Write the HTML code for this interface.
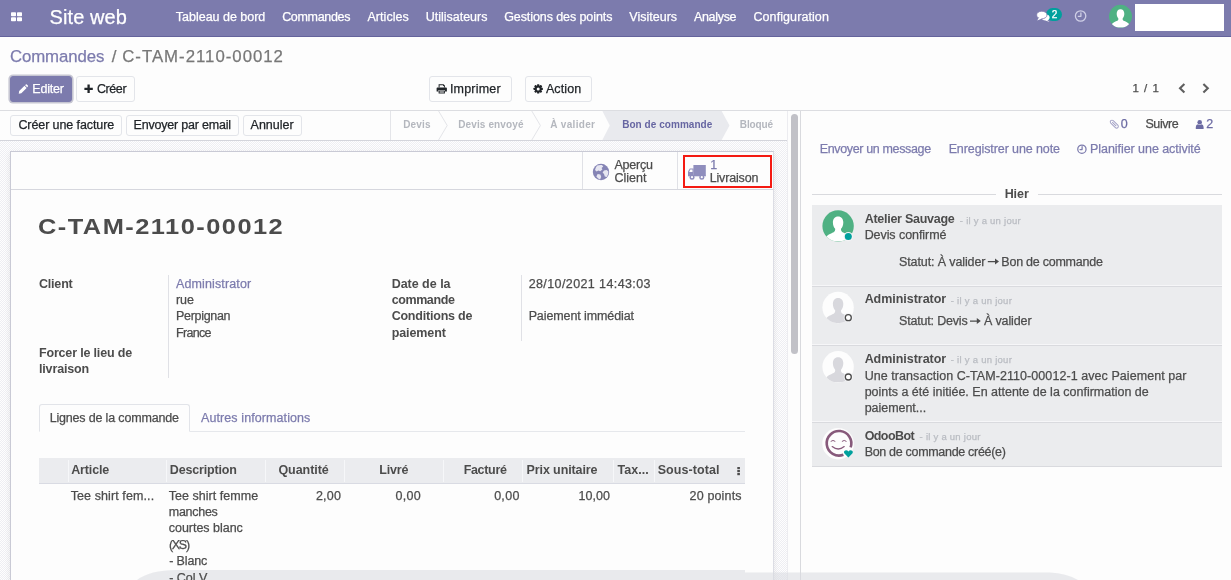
<!DOCTYPE html>
<html lang="fr">
<head>
<meta charset="utf-8">
<title>Commandes / C-TAM-2110-00012 - Site web</title>
<style>
html,body{margin:0;padding:0;}
body{width:1231px;height:580px;overflow:hidden;position:relative;background:#fdfdfd;
  font-family:"Liberation Sans",sans-serif;font-size:12.5px;color:#4c4c4c;}
.abs,.t,svg.i{position:absolute;}
.t{white-space:nowrap;line-height:1;z-index:5;-webkit-text-stroke:.25px currentColor;}
svg.i{z-index:4;overflow:visible;}
/* navbar */
#navbar{left:0;top:0;width:1231px;height:36px;background:#7c7bad;border-bottom:1px solid #64639b;}
#userbox{left:1135px;top:4px;width:89px;height:27px;background:#fff;}
#badge{left:1046.4px;top:7.5px;width:16px;height:13px;border-radius:6.5px;background:#00a09d;z-index:4;}
/* control panel */
#cp{left:0;top:37px;width:1231px;height:73px;background:#fdfdfd;border-bottom:1px solid #dcdde1;}
.btn{box-sizing:border-box;border:1px solid #e3e5ea;border-radius:3px;background:#fdfdfd;}
#b-edit{left:10px;top:76px;width:62px;height:25.8px;background:#7c7bad;border-color:#7c7bad;box-shadow:0 0 0 1.6px #c6c6d2;}
#b-create{left:76px;top:76px;width:58.7px;height:25.8px;}
#b-print{left:428.5px;top:76px;width:83px;height:25.8px;}
#b-action{left:525.3px;top:76px;width:67.2px;height:25.8px;}
/* statusbar */
#sb{left:0;top:111px;width:787px;height:29px;background:#fdfdfd;border-bottom:1px solid #d3d4db;}
#sb1{left:10.4px;top:115.4px;width:111.8px;height:20.6px;}
#sb2{left:126.1px;top:115.4px;width:112.5px;height:20.6px;}
#sb3{left:242.5px;top:115.4px;width:59.5px;height:20.6px;}
/* form area */
#formbg{left:0;top:141px;width:787px;height:439px;background:repeating-conic-gradient(#fefefe 0 25%,#eeeef3 0 50%) 0 0/2px 2px;}
#sheet{left:10px;top:151px;width:762px;height:440px;background:#fdfdfd;border:1px solid #c9cad5;border-right-color:#dcdde4;box-shadow:0 2px 6px rgba(0,0,0,.08);}
#bbox{left:11px;top:152px;width:762px;height:37px;border-bottom:1px solid #d6d7de;}
.vsep{width:1px;background:#e0e1e6;}
#red{left:683px;top:155px;width:84.5px;height:29px;border:2px solid #f41a12;z-index:6;}
/* notebook */
#tabline{left:39px;top:431px;width:705.5px;height:1px;background:#e6e8ec;}
#tab1{left:39px;top:404px;width:151px;height:28px;box-sizing:border-box;border:1px solid #e2e4e9;border-bottom:1px solid #fdfdfd;border-radius:3px 3px 0 0;background:#fdfdfd;}
#thead{left:39px;top:458px;width:705.5px;height:24.5px;background:#ebecef;border-bottom:1.5px solid #d9dbe3;}
.csep{top:460px;height:22px;width:1px;background:#f6f7f9;}
/* scroll */
#track{left:787px;top:111px;width:13px;height:469px;background:#fdfdfd;border-left:1px solid #ececf0;box-sizing:border-box;}
#thumb{left:791px;top:114px;width:7px;height:240px;border-radius:3.5px;background:#c1c1c7;}
/* chatter */
#chat{left:800px;top:111px;width:431px;height:469px;background:#fdfdfd;border-left:1px solid #d9dade;box-sizing:border-box;}
.hl{height:1px;background:#d9dade;}
#msgs{left:812px;top:205px;width:410px;height:261px;background:#ebecee;border-bottom:1px solid #d9dade;}
.msep{left:812px;width:410px;height:1px;background:#d9dade;box-shadow:0 -1px 0 #f6f6f8;}
#overlay{left:0;top:0;z-index:3;}
#txt{position:absolute;left:0;top:0;width:1231px;height:580px;z-index:5;will-change:transform;}
</style>
</head>
<body>
<!-- ===== top navigation bar ===== -->
<nav id="navbar" class="abs"></nav>
<div id="userbox" class="abs"></div>
<div id="badge" class="abs"></div>
<!-- ===== control panel ===== -->
<div id="cp" class="abs"></div>
<div id="b-edit" class="abs btn"></div>
<div id="b-create" class="abs btn"></div>
<div id="b-print" class="abs btn"></div>
<div id="b-action" class="abs btn"></div>
<!-- ===== status bar ===== -->
<div id="sb" class="abs"></div>
<div id="sb1" class="abs btn"></div>
<div id="sb2" class="abs btn"></div>
<div id="sb3" class="abs btn"></div>
<!-- ===== form ===== -->
<div id="formbg" class="abs"></div>
<div id="sheet" class="abs"></div>
<div id="bbox" class="abs"></div>
<div class="abs vsep" style="left:582px;top:152px;height:37px"></div>
<div class="abs vsep" style="left:677px;top:152px;height:37px"></div>
<div id="red" class="abs"></div>
<div class="abs vsep" style="left:168px;top:275px;height:103px"></div>
<div class="abs vsep" style="left:521px;top:275px;height:66px"></div>
<div id="tabline" class="abs"></div>
<div id="tab1" class="abs"></div>
<div id="thead" class="abs"></div>
<div class="abs csep" style="left:68px"></div>
<div class="abs csep" style="left:166px"></div>
<div class="abs csep" style="left:265px"></div>
<div class="abs csep" style="left:344px"></div>
<div class="abs csep" style="left:443px"></div>
<div class="abs csep" style="left:522px"></div>
<div class="abs csep" style="left:613px"></div>
<div class="abs csep" style="left:654px"></div>
<div id="track" class="abs"></div>
<div id="thumb" class="abs"></div>
<!-- ===== chatter ===== -->
<div id="chat" class="abs"></div>
<div class="abs hl" style="left:812px;top:194px;width:184px"></div>
<div class="abs hl" style="left:1038px;top:194px;width:184px"></div>
<div id="msgs" class="abs"></div>
<div class="abs msep" style="top:286px"></div>
<div class="abs msep" style="top:344.5px"></div>
<div class="abs msep" style="top:421.5px"></div>

<!-- ===== vector icons & shapes ===== -->
<svg id="gfx" class="i" style="left:0;top:0" width="1231" height="580" viewBox="0 0 1231 580">
<!-- apps grid -->
<g fill="#fff">
<rect x="11" y="12.2" width="5" height="4" rx=".8"/><rect x="17" y="12.2" width="5" height="4" rx=".8"/>
<rect x="11" y="17.2" width="5" height="4" rx=".8"/><rect x="17" y="17.2" width="5" height="4" rx=".8"/>
</g>
<!-- comments -->
<g fill="#fff">
<ellipse cx="1045.6" cy="17.6" rx="4" ry="3"/><path d="M1046.5,19.5 L1049.6,22 L1045.5,20.6Z"/>
<ellipse cx="1041.8" cy="15" rx="5.2" ry="3.8" stroke="#7c7bad" stroke-width=".8"/><path d="M1039,17.5 L1037.2,20.6 L1042,18.6Z"/>
</g>
<!-- clock (navbar) -->
<g fill="none" stroke="#cfcfe6" stroke-width="1.3" stroke-linecap="round" stroke-linejoin="round">
<circle cx="1080.6" cy="16" r="5.2"/><path d="M1080.9,12.9 V16.3 H1078.3"/>
</g>
<!-- user avatar (navbar) -->
<defs>
<clipPath id="c1"><circle cx="1120.5" cy="16.3" r="11.5"/></clipPath>
<clipPath id="c2"><circle cx="838.1" cy="226" r="15.7"/></clipPath>
<clipPath id="c3"><circle cx="838.1" cy="307.5" r="15.7"/></clipPath>
<clipPath id="c4"><circle cx="838.1" cy="366.8" r="15.7"/></clipPath>
<symbol id="sil" viewBox="0 0 32 32">
<path d="M16,6.3 C19.4,6.3 21.3,9 21.3,12.4 C21.3,15.2 20.2,17.6 19,18.9 C18.8,20.4 19.3,21.6 20.5,22.3 C24,24 27.4,24.9 28.6,28.4 L28.8,32 L3.2,32 L3.4,28.4 C4.6,24.9 8,24 11.5,22.3 C12.7,21.6 13.2,20.4 13,18.9 C11.8,17.6 10.7,15.2 10.7,12.4 C10.7,9 12.6,6.3 16,6.3Z"/>
</symbol>
</defs>
<circle cx="1120.5" cy="16.3" r="11.5" fill="#4fb183"/>
<g clip-path="url(#c1)" fill="#fff"><use href="#sil" x="1109" y="4.8" width="23" height="23"/></g>
<!-- pencil -->
<g fill="#fff"><path d="M19,93.6 L19.5,90.6 L25.7,84.4 L28.2,86.9 L22,93.1Z M26.4,83.7 L27.2,82.9 Q27.8,82.4 28.4,83 L29.6,84.2 Q30.1,84.8 29.6,85.4 L28.9,86.2Z" transform="translate(23.3,89) scale(.86) translate(-24.3,-88.2)"/></g>
<!-- plus -->
<path d="M88.6,84.6 V93 M84.4,88.8 H92.8" stroke="#212529" stroke-width="2.3" fill="none"/>
<!-- print -->
<g fill="#212529">
<path d="M438.6,84.2 H443.6 L444.9,85.5 V87.6 H443.9 V86 H443 V85.2 H439.6 V87.6 H438.6Z"/>
<path d="M437.4,87.4 H446 Q446.9,87.4 446.9,88.3 V91.6 H445 V90 H438.4 V91.6 H436.6 V88.3 Q436.6,87.4 437.4,87.4Z"/>
<path d="M438.6,90.6 H444.9 V93.5 H438.6Z M439.6,91.5 V92.6 H443.9 V91.5Z" fill-rule="evenodd"/>
</g>
<!-- cog -->
<g transform="translate(538.2,88.9)">
<g fill="#212529">
<rect x="-1.1" y="-4.7" width="2.2" height="9.4" rx=".4"/>
<rect x="-1.1" y="-4.7" width="2.2" height="9.4" rx=".4" transform="rotate(45)"/>
<rect x="-1.1" y="-4.7" width="2.2" height="9.4" rx=".4" transform="rotate(90)"/>
<rect x="-1.1" y="-4.7" width="2.2" height="9.4" rx=".4" transform="rotate(135)"/>
<circle r="3.5"/></g><circle r="1.5" fill="#fff"/>
</g>
<!-- pager chevrons -->
<g fill="none" stroke="#5f5f5f" stroke-width="2.1">
<path d="M1184.4,83.9 L1180,88.2 L1184.4,92.5"/><path d="M1203.4,83.9 L1207.8,88.2 L1203.4,92.5"/>
</g>
<!-- statusbar arrows -->
<path d="M602.4,111 H721.6 L729.5,125.5 L721.6,140 H602.4 L609.8,125.5Z" fill="#e9eaee"/>
<g fill="none" stroke="#e4e5e9" stroke-width="1">
<path d="M390.5,111 V140"/>
<path d="M438.6,111 L447.2,125.5 L438.6,140"/>
<path d="M531.8,111 L540.4,125.5 L531.8,140"/>
</g>
<!-- globe -->
<circle cx="601" cy="172" r="8.2" fill="#8584b5"/>
<g fill="#e6e6f1">
<path d="M597.2,165.6 Q599.6,164.6 602,165 L603.2,166.6 L601.6,168 L602.4,169.6 L600.2,171.2 L598.4,170.4 L596.6,171.6 L595,170 Q595.6,167.2 597.2,165.6Z"/>
<path d="M604,170.6 L606.6,170 L608.4,171.6 Q608.6,174.6 606.8,177 L604.8,176.4 L604,174 L602.6,172.4Z"/>
<path d="M597.6,174 L600.4,174.6 L601.2,177 L600,179.4 Q597.6,178.6 596.4,176.6Z"/>
</g>
<!-- truck -->
<g fill="#8f8ebd">
<path d="M693.4,165 H705.8 V175.4 H693.4Z"/>
<path d="M689.8,168.4 H693.6 V175.4 H688 V171.6Z"/><rect x="688" y="175" width="17.8" height="1.3"/>
<circle cx="692" cy="177.2" r="2.5"/><circle cx="701.8" cy="177.2" r="2.5"/>
</g>
<circle cx="692" cy="177.2" r="1.1" fill="#fff"/><circle cx="701.8" cy="177.2" r="1.1" fill="#fff"/>
<path d="M690.3,169.6 H692.5 V172 H689.2Z" fill="#fff"/>
<!-- kebab -->
<g fill="#4c4c4c"><rect x="737.3" y="467" width="2.6" height="2.2"/><rect x="737.3" y="470" width="2.6" height="2.2"/><rect x="737.3" y="473" width="2.6" height="2.2"/></g>
<!-- paperclip -->
<g transform="translate(1114.3,124.15) rotate(-45)" fill="none" stroke="#a3a2c6" stroke-width=".95" stroke-linecap="round">
<rect x="-1.75" y="-5" width="3.5" height="10" rx="1.75"/><path d="M0,-2.6 V2.4"/>
</g>
<!-- followers user -->
<g fill="#6c6ba3"><circle cx="1199.7" cy="122.3" r="2.3"/><path d="M1195.8,128.9 V127 Q1195.9,124.6 1198,124.3 Q1199.7,125.5 1201.4,124.3 Q1203.5,124.6 1203.6,127 V128.9Z"/></g>
<!-- clock (chatter) -->
<g fill="none" stroke="#7c7bad" stroke-width="1.25" stroke-linecap="round" stroke-linejoin="round">
<circle cx="1081.9" cy="149.2" r="4.15"/><path d="M1082.1,146.7 V149.5 H1080"/>
</g>
<!-- long arrows -->
<g fill="#4c4c4c">
<path d="M987.8,260.9 H995 V258.6 L999,261.6 L995,264.6 V262.3 H987.8Z"/>
<path d="M970,320.4 H976.8 V318.1 L980.8,321.1 L976.8,324.1 V321.8 H970Z"/>
</g>
<!-- avatars -->
<circle cx="838.1" cy="226" r="15.7" fill="#4fb183"/>
<g clip-path="url(#c2)" fill="#fff"><use href="#sil" x="822.4" y="210.3" width="31.4" height="31.4"/></g>
<circle cx="848.3" cy="236.6" r="4.7" fill="#f3f3f5"/><circle cx="848.3" cy="236.6" r="3.5" fill="#00a09d"/>
<circle cx="838.1" cy="307.5" r="15.7" fill="#fdfdfd"/>
<g clip-path="url(#c3)" fill="#d8d8dd"><use href="#sil" x="822.4" y="291.8" width="31.4" height="31.4"/></g>
<circle cx="848.3" cy="317.7" r="4.7" fill="#f3f3f5"/><circle cx="848.3" cy="317.7" r="3" fill="#fff" stroke="#4c4c4c" stroke-width="1.3"/>
<circle cx="838.1" cy="366.8" r="15.7" fill="#fdfdfd"/>
<g clip-path="url(#c4)" fill="#d8d8dd"><use href="#sil" x="822.4" y="351.1" width="31.4" height="31.4"/></g>
<circle cx="848.3" cy="377" r="4.7" fill="#f3f3f5"/><circle cx="848.3" cy="377" r="3" fill="#fff" stroke="#4c4c4c" stroke-width="1.3"/>
<!-- odoobot -->
<circle cx="838.1" cy="443.7" r="15.8" fill="#fdfdfd"/>
<g fill="none" stroke="#875a7b" stroke-linecap="round">
<path d="M850.6,447.4 A12.3,12.3 0 1 0 843.4,454.8" stroke-width="2.6" stroke-linecap="butt"/>
<path d="M832.2,446.6 Q838.2,451.4 844.2,446.6" stroke-width="1.3"/>
<path d="M831,441.2 Q833,439.4 835,441.2" stroke-width="1"/>
<path d="M842.2,441.2 Q844.2,439.4 846.2,441.2" stroke-width="1"/>
</g>
<path d="M848.4,457.4 L844.5,453.6 Q843.2,451.5 845.2,450.4 Q847.2,449.8 848.4,451.6 Q849.6,449.8 851.6,450.4 Q853.6,451.5 852.3,453.6Z" fill="#00a09d"/>

</svg>
<svg id="overlay" class="abs" width="1231" height="580" viewBox="0 0 1231 580">
<path d="M137,580 Q150,570 176,570 L745,570 L745,572.5 L1050,572.5 Q1066,573 1078,580 Z" fill="#d9dbe0" fill-opacity=".55"/>
</svg>
<!-- ===== text ===== -->
<div id="txt">
<span class="t" style="left:49.50px;top:7.12px;font-size:20px;color:#fff;letter-spacing:0.097px;">Site web</span>
<span class="t" style="left:175.84px;top:11.07px;color:#fff;letter-spacing:-0.017px;">Tableau de bord</span>
<span class="t" style="left:282.14px;top:11.07px;color:#fff;letter-spacing:-0.319px;">Commandes</span>
<span class="t" style="left:367.44px;top:11.07px;color:#fff;letter-spacing:0.049px;">Articles</span>
<span class="t" style="left:425.64px;top:11.07px;color:#fff;letter-spacing:-0.000px;">Utilisateurs</span>
<span class="t" style="left:504.14px;top:11.07px;color:#fff;letter-spacing:-0.082px;">Gestions des points</span>
<span class="t" style="left:629.34px;top:11.07px;color:#fff;letter-spacing:0.001px;">Visiteurs</span>
<span class="t" style="left:693.94px;top:11.07px;color:#fff;letter-spacing:-0.310px;">Analyse</span>
<span class="t" style="left:753.44px;top:11.07px;color:#fff;letter-spacing:0.089px;">Configuration</span>
<span class="t" style="left:1051.75px;top:9.59px;font-size:10px;color:#fff;">2</span>
<span class="t" style="left:9.94px;top:49.43px;font-size:16.8px;color:#7c7bad;letter-spacing:-0.091px;">Commandes</span>
<span class="t" style="left:111.84px;top:49.43px;font-size:16.8px;color:#777;">/</span>
<span class="t" style="left:122.24px;top:49.43px;font-size:16.8px;color:#777;letter-spacing:0.993px;">C-TAM-2110-00012</span>
<span class="t" style="left:32.34px;top:83.27px;color:#fff;letter-spacing:-0.206px;">Editer</span>
<span class="t" style="left:96.94px;top:83.27px;color:#212529;letter-spacing:-0.410px;">Créer</span>
<span class="t" style="left:449.94px;top:83.27px;color:#212529;letter-spacing:0.188px;">Imprimer</span>
<span class="t" style="left:545.94px;top:83.27px;color:#212529;letter-spacing:0.095px;">Action</span>
<span class="t" style="left:1132.48px;top:82.72px;font-size:11.5px;letter-spacing:0.986px;">1 / 1</span>
<span class="t" style="left:18.44px;top:119.07px;color:#212529;letter-spacing:-0.097px;">Créer une facture</span>
<span class="t" style="left:133.54px;top:119.07px;color:#212529;letter-spacing:-0.195px;">Envoyer par email</span>
<span class="t" style="left:250.54px;top:119.07px;color:#212529;letter-spacing:0.022px;">Annuler</span>
<span class="t" style="left:403.25px;top:120.28px;font-size:10px;font-weight:700;-webkit-text-stroke:0;color:#b4b7be;letter-spacing:0.128px;">Devis</span>
<span class="t" style="left:458.25px;top:120.28px;font-size:10px;font-weight:700;-webkit-text-stroke:0;color:#b4b7be;letter-spacing:0.115px;">Devis envoyé</span>
<span class="t" style="left:550.15px;top:120.28px;font-size:10px;font-weight:700;-webkit-text-stroke:0;color:#b4b7be;letter-spacing:0.319px;">À valider</span>
<span class="t" style="left:622.15px;top:120.28px;font-size:10px;font-weight:700;-webkit-text-stroke:0;color:#6766a2;letter-spacing:0.052px;">Bon de commande</span>
<span class="t" style="left:739.85px;top:120.28px;font-size:10px;font-weight:700;-webkit-text-stroke:0;color:#b4b7be;letter-spacing:-0.158px;">Bloqué</span>
<span class="t" style="left:614.44px;top:159.37px;letter-spacing:-0.237px;">Aperçu</span>
<span class="t" style="left:614.44px;top:171.67px;letter-spacing:-0.009px;">Client</span>
<span class="t" style="left:710.24px;top:159.37px;color:#7c7bad;">1</span>
<span class="t" style="left:709.64px;top:171.67px;letter-spacing:-0.151px;">Livraison</span>
<span class="t" style="left:38.49px;top:216.00px;font-size:22.5px;font-weight:700;-webkit-text-stroke:0;letter-spacing:1.293px;transform:scaleX(1.13);transform-origin:0 0;">C-TAM-2110-00012</span>
<span class="t" style="left:38.94px;top:277.57px;font-weight:700;-webkit-text-stroke:0;letter-spacing:-0.182px;">Client</span>
<span class="t" style="left:38.94px;top:347.47px;font-weight:700;-webkit-text-stroke:0;letter-spacing:-0.166px;">Forcer le lieu de</span>
<span class="t" style="left:38.94px;top:363.37px;font-weight:700;-webkit-text-stroke:0;letter-spacing:-0.137px;">livraison</span>
<span class="t" style="left:175.94px;top:277.57px;color:#7c7bad;letter-spacing:0.132px;">Administrator</span>
<span class="t" style="left:175.94px;top:293.87px;letter-spacing:-0.077px;">rue</span>
<span class="t" style="left:175.94px;top:310.17px;letter-spacing:-0.297px;">Perpignan</span>
<span class="t" style="left:175.94px;top:326.87px;letter-spacing:-0.656px;">France</span>
<span class="t" style="left:391.64px;top:277.57px;font-weight:700;-webkit-text-stroke:0;letter-spacing:-0.015px;">Date de la</span>
<span class="t" style="left:391.64px;top:293.87px;font-weight:700;-webkit-text-stroke:0;letter-spacing:-0.396px;">commande</span>
<span class="t" style="left:391.64px;top:310.17px;font-weight:700;-webkit-text-stroke:0;letter-spacing:-0.209px;">Conditions de</span>
<span class="t" style="left:391.64px;top:326.87px;font-weight:700;-webkit-text-stroke:0;letter-spacing:-0.095px;">paiement</span>
<span class="t" style="left:528.64px;top:277.57px;letter-spacing:0.401px;">28/10/2021 14:43:03</span>
<span class="t" style="left:528.64px;top:310.17px;letter-spacing:-0.098px;">Paiement immédiat</span>
<span class="t" style="left:49.64px;top:412.07px;letter-spacing:-0.170px;">Lignes de la commande</span>
<span class="t" style="left:201.04px;top:412.07px;color:#7c7bad;letter-spacing:0.091px;">Autres informations</span>
<span class="t" style="left:71.14px;top:463.97px;font-weight:700;-webkit-text-stroke:0;letter-spacing:-0.130px;">Article</span>
<span class="t" style="left:169.84px;top:463.97px;font-weight:700;-webkit-text-stroke:0;letter-spacing:-0.164px;">Description</span>
<span class="t" style="left:278.44px;top:463.97px;font-weight:700;-webkit-text-stroke:0;letter-spacing:-0.054px;">Quantité</span>
<span class="t" style="left:379.34px;top:463.97px;font-weight:700;-webkit-text-stroke:0;letter-spacing:-0.191px;">Livré</span>
<span class="t" style="left:463.64px;top:463.97px;font-weight:700;-webkit-text-stroke:0;letter-spacing:-0.305px;">Facturé</span>
<span class="t" style="left:526.54px;top:463.97px;font-weight:700;-webkit-text-stroke:0;letter-spacing:-0.102px;">Prix unitaire</span>
<span class="t" style="left:617.44px;top:463.97px;font-weight:700;-webkit-text-stroke:0;letter-spacing:0.059px;">Tax...</span>
<span class="t" style="left:657.64px;top:463.97px;font-weight:700;-webkit-text-stroke:0;letter-spacing:0.080px;">Sous-total</span>
<span class="t" style="left:70.64px;top:489.57px;letter-spacing:0.103px;">Tee shirt fem...</span>
<span class="t" style="left:168.64px;top:489.57px;letter-spacing:0.043px;">Tee shirt femme</span>
<span class="t" style="left:168.74px;top:505.97px;letter-spacing:-0.268px;">manches</span>
<span class="t" style="left:168.74px;top:522.37px;letter-spacing:-0.020px;">courtes blanc</span>
<span class="t" style="left:168.94px;top:538.77px;letter-spacing:-1.292px;">(XS)</span>
<span class="t" style="left:169.24px;top:555.17px;letter-spacing:-0.130px;">- Blanc</span>
<span class="t" style="left:169.24px;top:571.57px;letter-spacing:-0.013px;">- Col V</span>
<span class="t" style="left:315.94px;top:489.57px;letter-spacing:0.227px;">2,00</span>
<span class="t" style="left:395.44px;top:489.57px;letter-spacing:0.294px;">0,00</span>
<span class="t" style="left:494.14px;top:489.57px;letter-spacing:0.294px;">0,00</span>
<span class="t" style="left:578.44px;top:489.57px;letter-spacing:0.061px;">10,00</span>
<span class="t" style="left:689.54px;top:489.57px;letter-spacing:0.161px;">20 points</span>
<span class="t" style="left:1120.84px;top:117.97px;color:#6c6ba3;">0</span>
<span class="t" style="left:1145.44px;top:117.97px;letter-spacing:-0.422px;">Suivre</span>
<span class="t" style="left:1206.34px;top:117.97px;color:#6c6ba3;">2</span>
<span class="t" style="left:819.74px;top:142.87px;color:#7c7bad;letter-spacing:-0.354px;">Envoyer un message</span>
<span class="t" style="left:948.64px;top:142.87px;color:#7c7bad;letter-spacing:-0.097px;">Enregistrer une note</span>
<span class="t" style="left:1090.04px;top:142.87px;color:#7c7bad;letter-spacing:-0.055px;">Planifier une activité</span>
<span class="t" style="left:1004.64px;top:188.47px;font-weight:700;-webkit-text-stroke:0;letter-spacing:-0.034px;">Hier</span>
<span class="t" style="left:864.64px;top:213.07px;font-weight:700;-webkit-text-stroke:0;letter-spacing:-0.262px;">Atelier Sauvage</span>
<span class="t" style="left:959.87px;top:215.61px;font-size:9.5px;color:#b9bcc2;letter-spacing:0.248px;">- il y a un jour</span>
<span class="t" style="left:864.64px;top:228.87px;letter-spacing:-0.065px;">Devis confirmé</span>
<span class="t" style="left:899.04px;top:255.67px;letter-spacing:-0.114px;">Statut: À valider</span>
<span class="t" style="left:1001.34px;top:255.67px;letter-spacing:-0.244px;">Bon de commande</span>
<span class="t" style="left:864.64px;top:293.27px;font-weight:700;-webkit-text-stroke:0;letter-spacing:-0.036px;">Administrator</span>
<span class="t" style="left:950.77px;top:295.81px;font-size:9.5px;color:#b9bcc2;letter-spacing:0.268px;">- il y a un jour</span>
<span class="t" style="left:899.04px;top:315.17px;letter-spacing:-0.188px;">Statut: Devis</span>
<span class="t" style="left:983.94px;top:315.17px;letter-spacing:-0.127px;">À valider</span>
<span class="t" style="left:864.64px;top:352.77px;font-weight:700;-webkit-text-stroke:0;letter-spacing:-0.036px;">Administrator</span>
<span class="t" style="left:950.77px;top:355.31px;font-size:9.5px;color:#b9bcc2;letter-spacing:0.268px;">- il y a un jour</span>
<span class="t" style="left:864.64px;top:369.87px;letter-spacing:0.068px;">Une transaction C-TAM-2110-00012-1 avec Paiement par</span>
<span class="t" style="left:864.64px;top:385.77px;letter-spacing:-0.002px;">points a été initiée. En attente de la confirmation de</span>
<span class="t" style="left:864.64px;top:401.77px;letter-spacing:-0.032px;">paiement...</span>
<span class="t" style="left:864.64px;top:429.77px;font-weight:700;-webkit-text-stroke:0;letter-spacing:-0.557px;">OdooBot</span>
<span class="t" style="left:919.57px;top:432.31px;font-size:9.5px;color:#b9bcc2;letter-spacing:0.255px;">- il y a un jour</span>
<span class="t" style="left:864.64px;top:446.17px;letter-spacing:-0.308px;">Bon de commande créé(e)</span>
</div>
</body>
</html>
